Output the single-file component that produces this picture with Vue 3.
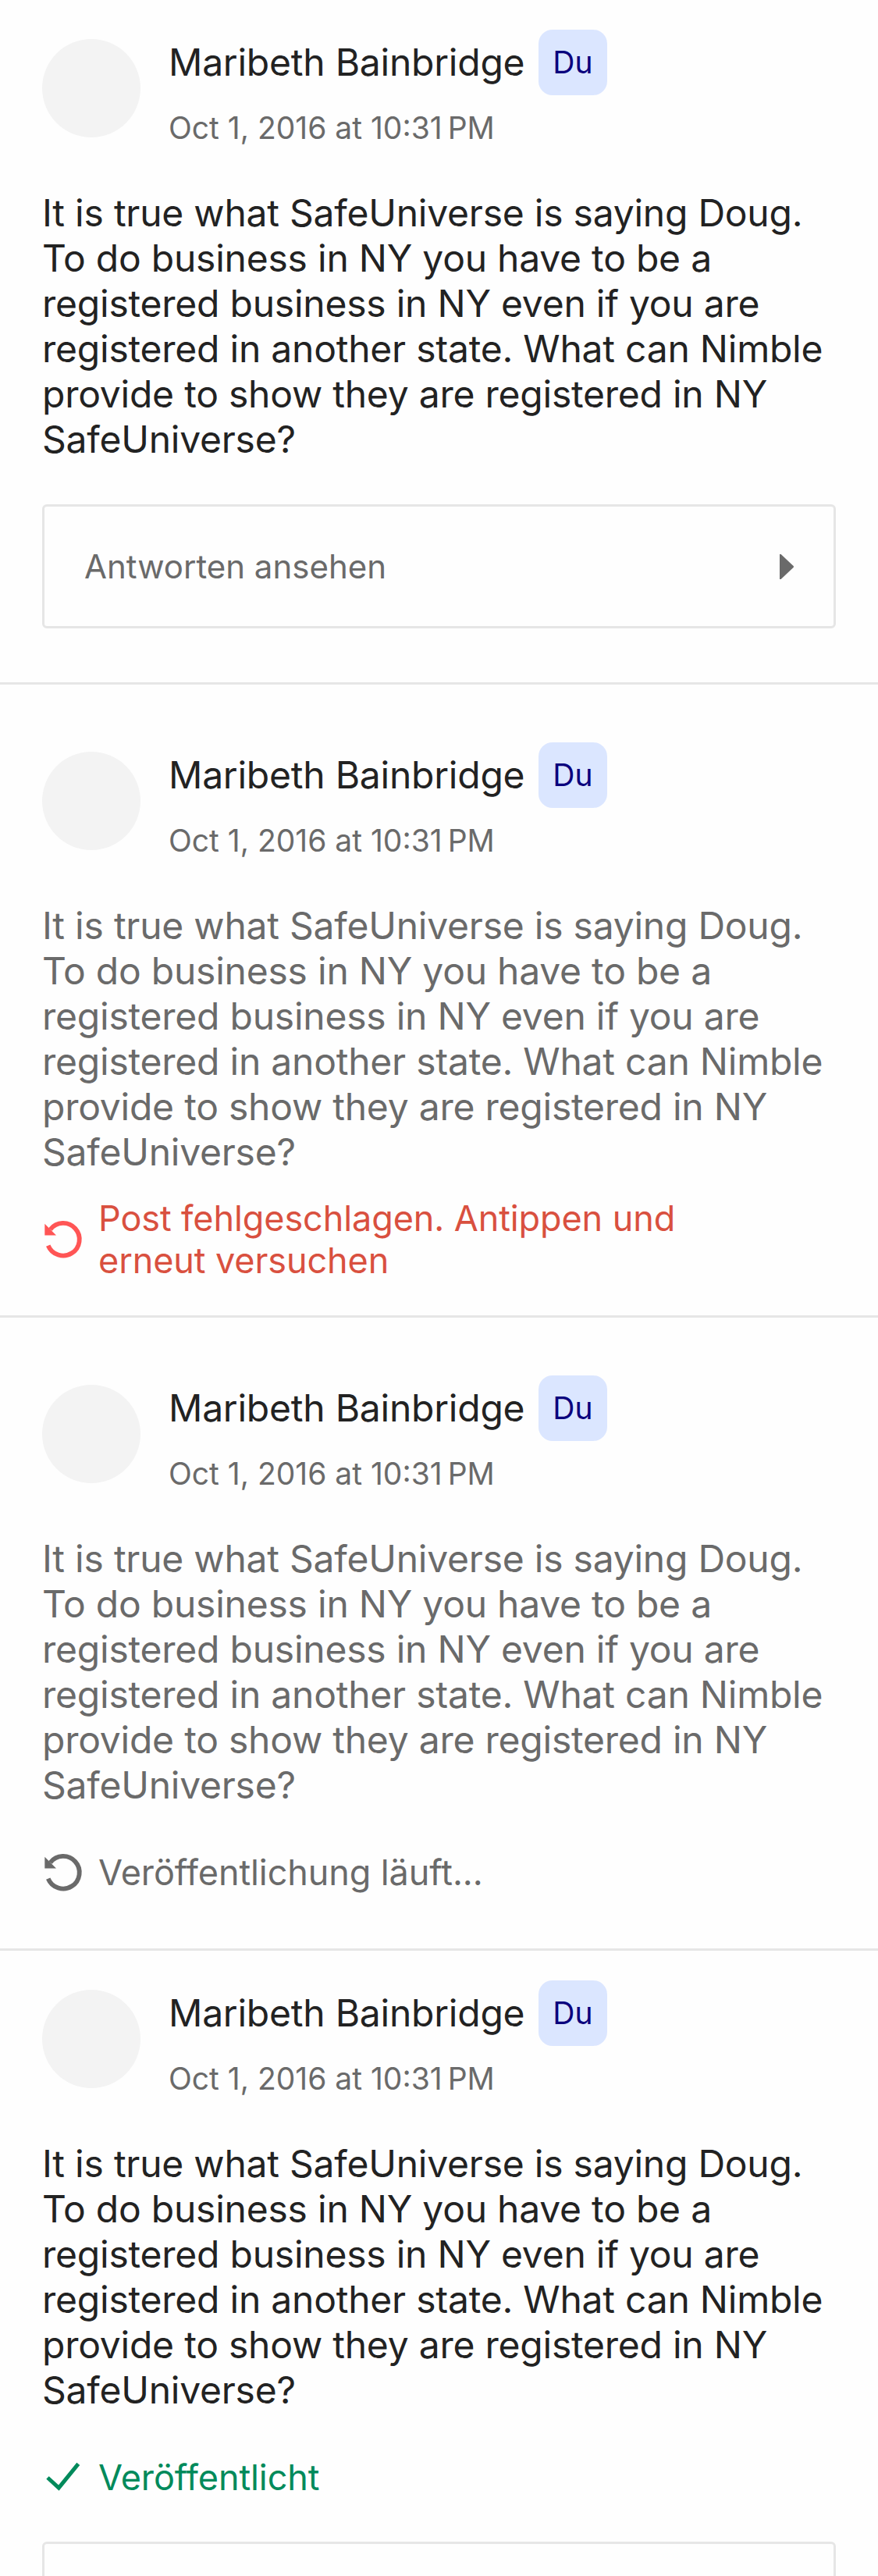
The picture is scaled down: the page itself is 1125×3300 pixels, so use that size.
<script setup>
const body =
  'It is true what SafeUniverse is saying Doug.\nTo do business in NY you have to be a\nregistered business in NY even if you are\nregistered in another state. What can Nimble\nprovide to show they are registered in NY\nSafeUniverse?'

const author = 'Maribeth Bainbridge'
const date = 'Oct 1, 2016 at 10:31\u202FPM'

const posts = [
  { id: 1, replies: true, repliesLabel: 'Antworten ansehen' },
  { id: 2, muted: true, spaced: true, status: 'failed', label: 'Post fehlgeschlagen. Antippen und\nerneut versuchen' },
  { id: 3, muted: true, spaced: true, status: 'pending', label: 'Veröffentlichung läuft...' },
  { id: 4, status: 'published', label: 'Veröffentlicht', replies: true },
]
</script>

<template>
  <main class="feed">
    <article v-for="post in posts" :key="post.id" class="post" :class="{ spaced: post.spaced, 'has-replies': post.replies }">
      <header class="head">
        <div class="avatar"></div>
        <div class="meta">
          <div class="name-row">
            <span class="name">{{ author }}</span>
            <span class="badge">Du</span>
          </div>
          <span class="date">{{ date }}</span>
        </div>
      </header>

      <p class="body" :class="{ muted: post.muted }">{{ body }}</p>

      <div v-if="post.status" class="status" :class="post.status">
        <svg class="status-icon" viewBox="0 0 54 54" fill="none">
          <path v-if="post.status === 'published'" d="M7 27 21.3 40 46.3 9.3" stroke="currentColor" stroke-width="5" />
          <template v-else>
            <path d="M7.7 34.6A20.8 20.8 0 1 0 10.5 14" stroke="currentColor" stroke-width="5.8" />
            <path d="M3.3 6.7V21.4H18Z" fill="currentColor" />
          </template>
        </svg>
        <span class="status-label">{{ post.label }}</span>
      </div>

      <div v-if="post.replies" class="replies">
        <template v-if="post.repliesLabel">
          <span class="replies-label">{{ post.repliesLabel }}</span>
          <svg class="caret" viewBox="0 0 18 32">
            <path d="M0 0H1.6L17.6 15Q18.4 16 17.6 17L1.6 32H0Z" fill="currentColor" />
          </svg>
        </template>
      </div>
    </article>
  </main>
</template>

<style>
body {
  background: #fefefe;
}
</style>

<style scoped>
.feed {
  height: 3300px;
  overflow: hidden;
  background: #fefefe;
  font-family: Inter, "Liberation Sans", sans-serif;
  color: #222;
}
.post {
  padding: 38px 54px 15px;
  border-bottom: 3px solid #e6e6e6;
}
.post.spaced {
  padding-top: 74px;
}
.post.has-replies {
  padding-bottom: 69px;
}
.head {
  display: flex;
  gap: 36px;
  height: 206px;
}
.avatar {
  flex: none;
  width: 126px;
  height: 126px;
  margin-top: 12px;
  border-radius: 50%;
  background: #f3f3f3;
}
.name-row {
  display: flex;
  align-items: center;
  gap: 18px;
  height: 84px;
}
.name {
  font-size: 48px;
  line-height: 58px;
  letter-spacing: -0.23px;
  white-space: nowrap;
}
.badge {
  height: 84px;
  padding: 0 18px;
  border-radius: 18px;
  background: #dbe6ff;
  color: #0a007d;
  font-size: 39px;
  line-height: 84px;
}
.date {
  display: block;
  margin-top: 18px;
  font-size: 39px;
  line-height: 48px;
  color: #6a6a6a;
  white-space: nowrap;
}
.body {
  margin: 0;
  font-size: 48px;
  line-height: 58px;
  letter-spacing: -0.23px;
  white-space: pre;
}
.muted {
  color: #6a6a6a;
}
.status {
  display: flex;
  align-items: center;
  gap: 18px;
  height: 165px;
}
.status-icon {
  flex: none;
  width: 54px;
  height: 54px;
}
.status-label {
  font-size: 45px;
  line-height: 54px;
  letter-spacing: -0.1px;
  white-space: pre;
}
.failed {
  color: #d9503f;
}
.failed .status-icon {
  color: #ff5555;
}
.pending {
  color: #6a6a6a;
}
.published {
  color: #008a5b;
}
.replies {
  display: flex;
  align-items: center;
  justify-content: space-between;
  box-sizing: border-box;
  height: 159px;
  padding: 0 51px;
  border: 3px solid #e6e6e6;
  border-radius: 6px;
  color: #6a6a6a;
}
.body + .replies {
  margin-top: 54px;
}
.replies-label {
  font-size: 42px;
  line-height: 52px;
}
.caret {
  width: 18px;
  height: 32px;
}
</style>
